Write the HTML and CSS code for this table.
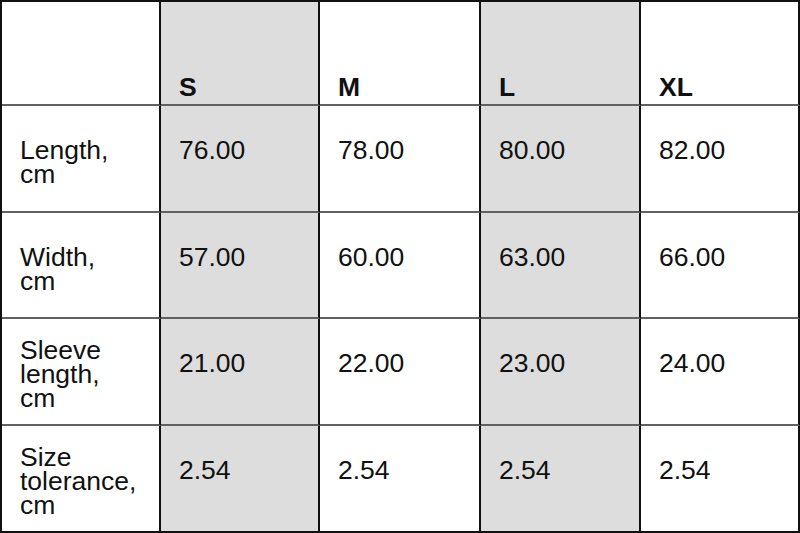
FILE: index.html
```html
<!DOCTYPE html>
<html lang="en">
<head>
<meta charset="utf-8">
<title>Size chart</title>
<link rel="stylesheet" href="styles.css">
</head>
<body>
<div class="sheet">
  <div class="cell head"></div>
  <div class="cell head gray">S</div>
  <div class="cell head">M</div>
  <div class="cell head gray">L</div>
  <div class="cell head">XL</div>

  <div class="cell label">Length,<br>cm</div>
  <div class="cell gray">76.00</div>
  <div class="cell">78.00</div>
  <div class="cell gray">80.00</div>
  <div class="cell">82.00</div>

  <div class="cell label">Width,<br>cm</div>
  <div class="cell gray">57.00</div>
  <div class="cell">60.00</div>
  <div class="cell gray">63.00</div>
  <div class="cell">66.00</div>

  <div class="cell label tall">Sleeve<br>length,<br>cm</div>
  <div class="cell gray">21.00</div>
  <div class="cell">22.00</div>
  <div class="cell gray">23.00</div>
  <div class="cell">24.00</div>

  <div class="cell label tall last">Size<br>tolerance,<br>cm</div>
  <div class="cell gray last">2.54</div>
  <div class="cell last">2.54</div>
  <div class="cell gray last">2.54</div>
  <div class="cell last">2.54</div>
</div>
</body>
</html>
```
FILE: styles.css
```css
html, body {
  margin: 0;
  padding: 0;
  background: #ffffff;
}

.sheet {
  box-sizing: border-box;
  width: 800px;
  height: 533px;
  display: grid;
  grid-template-columns: 159px 159px 161px 160px 159px;
  grid-template-rows: 104px 107px 106px 107px 107px;
  border-top: 2px solid #111111;
  border-left: 2px solid #111111;
  font-family: "Liberation Sans", Arial, sans-serif;
  font-size: 26.5px;
  line-height: 24px;
  color: #111111;
}

.cell {
  box-sizing: border-box;
  padding: 32px 10px 0 18px;
  border-right: 2px solid #111111;
  border-bottom: 2px solid #616161;
  overflow: hidden;
}

.gray {
  background: #dddddd;
}

.head {
  display: flex;
  align-items: flex-end;
  padding-top: 0;
  padding-bottom: 5px;
  font-weight: bold;
}

.label {
  padding-left: 18px;
}

.tall {
  padding-top: 19px;
}

.last {
  border-bottom-color: #111111;
}
```
